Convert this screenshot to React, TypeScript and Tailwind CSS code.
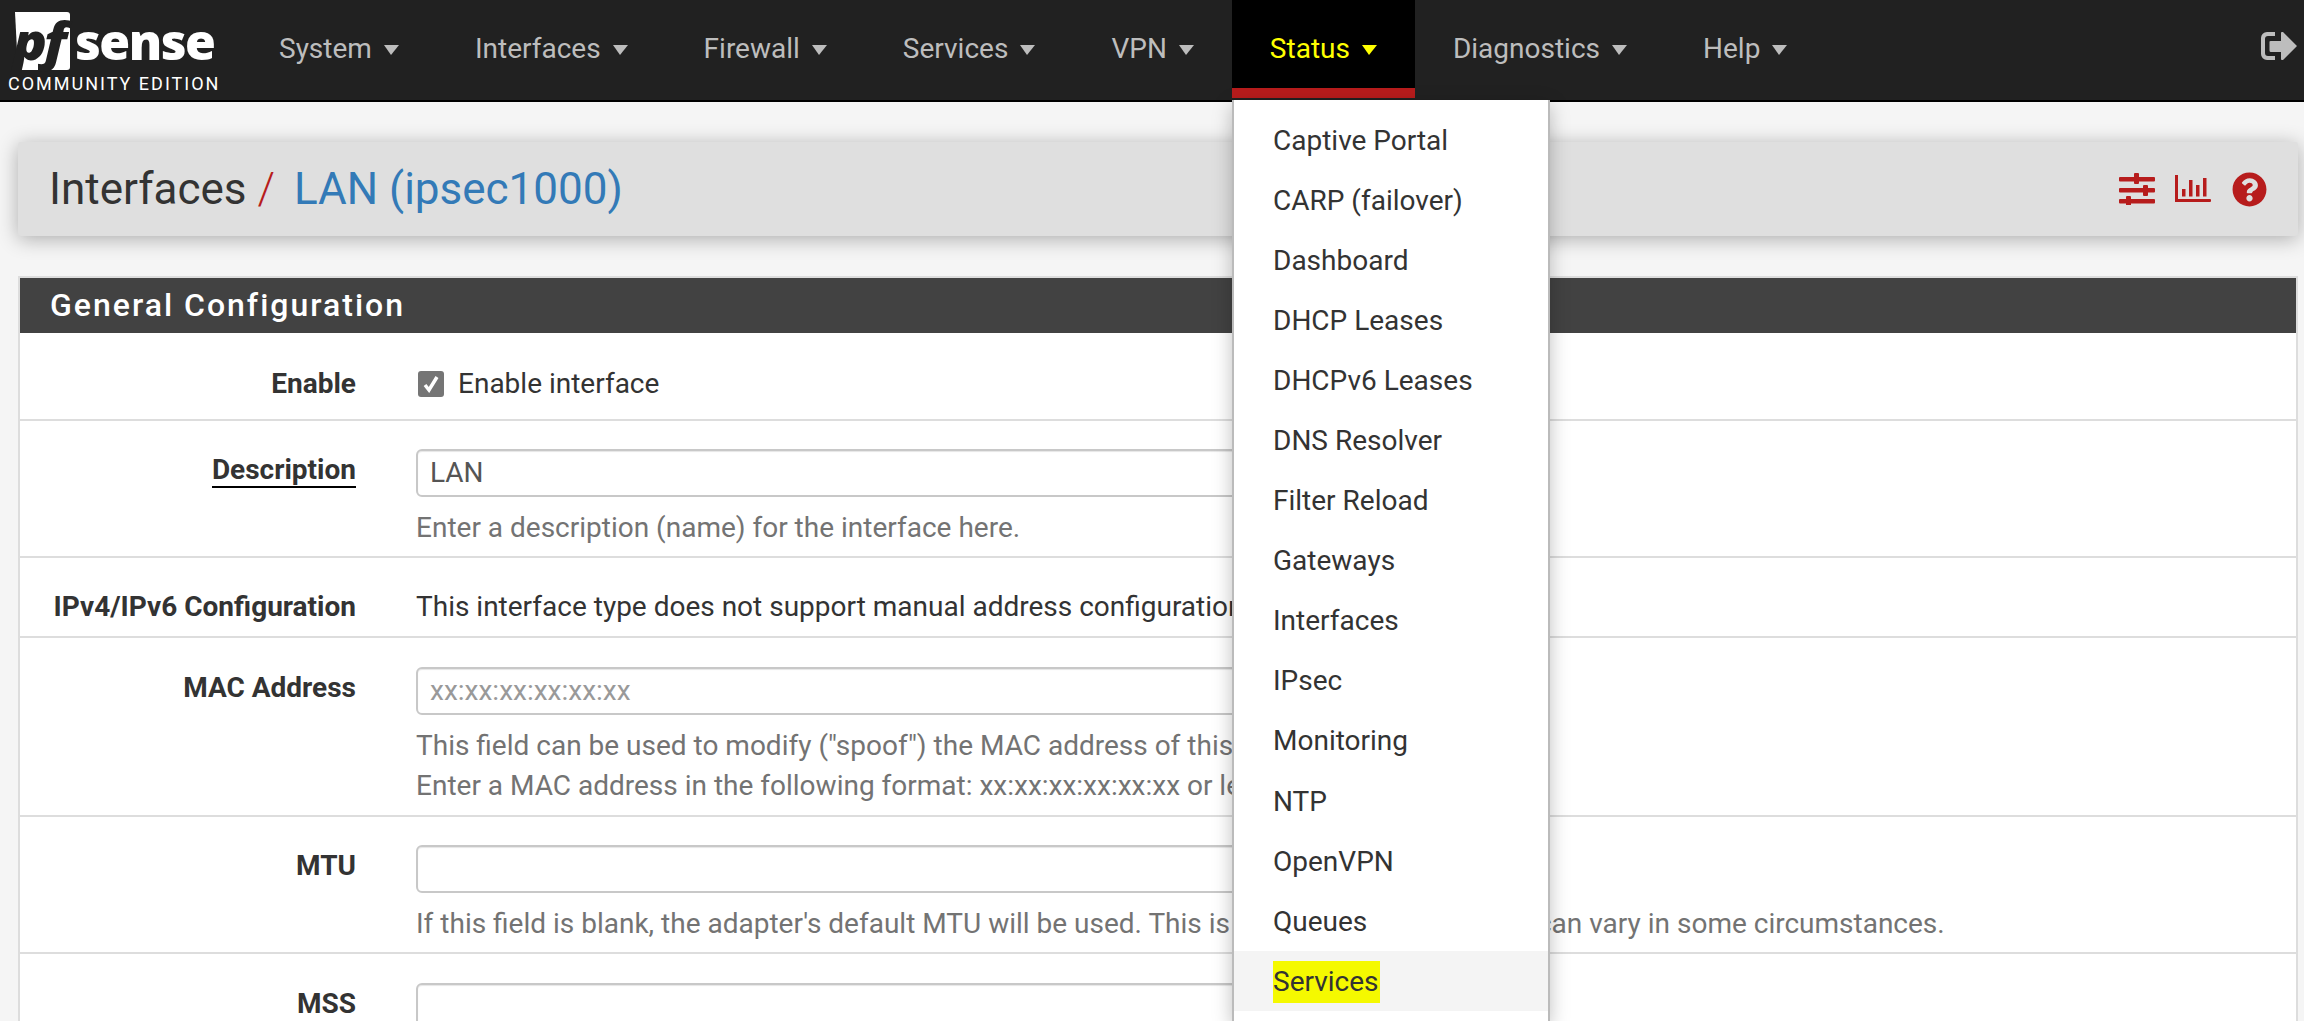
import { FaQuestionCircle } from 'react-icons/fa'

const navItems = ['System', 'Interfaces', 'Firewall', 'Services', 'VPN', 'Status', 'Diagnostics', 'Help']
const statusMenu = [
  'Captive Portal',
  'CARP (failover)',
  'Dashboard',
  'DHCP Leases',
  'DHCPv6 Leases',
  'DNS Resolver',
  'Filter Reload',
  'Gateways',
  'Interfaces',
  'IPsec',
  'Monitoring',
  'NTP',
  'OpenVPN',
  'Queues',
  'Services',
]

function Caret({ className }: { className: string }) {
  return <span className={`ml-[12px] mt-[3px] inline-block h-0 w-0 border-l-[7px] border-r-[8px] border-t-[10px] border-x-transparent ${className}`} />
}

function Logo() {
  return (
    <div className="w-[241px] shrink-0 pl-[8px] pt-[12px]">
      <div className="flex h-[58px] items-end">
        <div className="relative ml-[4px] h-[58px] w-[58px]">
          <svg width="58" height="58" viewBox="0 0 58 58" className="absolute inset-0">
            <path d="M3 0h52a3 3 0 0 1 3 3v52a3 3 0 0 1-3 3H6z" fill="white" />
          </svg>
          <span className="absolute left-[1px] top-[-3px] origin-left scale-x-[1.08] font-['Open_Sans',sans-serif] text-[52px] font-extrabold italic leading-[62px] tracking-[-3px] text-[#212121]">pf</span>
        </div>
        <span className="ml-[5px] font-['Open_Sans',sans-serif] text-[50px] font-extrabold leading-[58px] tracking-[-1.5px] text-white">sense</span>
      </div>
      <div className="mt-[4px] whitespace-nowrap font-['Roboto',sans-serif] text-[18px] leading-[20px] tracking-[2px] text-white">COMMUNITY EDITION</div>
    </div>
  )
}

function Navbar() {
  return (
    <nav className="flex h-[102px] border-b-[2px] border-black bg-[#212121]">
      <Logo />
      {navItems.map((item) =>
        item === 'Status' ? (
          <div key={item} className="flex h-[98px] items-center border-b-[10px] border-[#b71c1c] bg-black px-[38px] pt-[9px] text-[28px] text-[#ffff00]">
            {item}
            <Caret className="border-t-[#ffff00]" />
          </div>
        ) : (
          <div key={item} className="flex h-[98px] items-center px-[38px] pb-[1px] text-[28px] text-[#bdbdbd]">
            {item}
            <Caret className="border-t-[#bdbdbd]" />
          </div>
        ),
      )}
      <div className="ml-auto pr-[7px] pt-[32px]">
        <svg width="36" height="28" viewBox="0 0 36 28" className="text-[#bdbdbd]" fill="currentColor">
          <path d="M0 6a6 6 0 0 1 6-6h8v4H7a3 3 0 0 0-3 3v14a3 3 0 0 0 3 3h7v4H6a6 6 0 0 1-6-6z" />
          <path d="M22 0l14 14-14 14c-1 .6-2-.2-2-1v-7H10a1.500 1.500 0 0 1-1.500-1.500v-9A1.500 1.500 0 0 1 10 9h10V1c0-.8 1-1.600 2-1z" />
        </svg>
      </div>
    </nav>
  )
}

function PageHeader() {
  return (
    <div className="ml-[18px] mr-[6px] mt-[40px] flex h-[94px] items-center justify-between rounded-[3px] bg-[#dfdfdf] pl-[31px] pr-[31px] shadow-[0_3px_20px_rgba(0,0,0,0.3)]">
      <h1 className="text-[44px] font-normal leading-none text-[#333333]">
        Interfaces <span className="font-light text-[#b71c1c]">/</span>
        <span className="ml-[19px] text-[#337ab7]">LAN (ipsec1000)</span>
      </h1>
      <div className="flex items-center text-[#b71c1c]">
        <svg width="36" height="32" viewBox="0 0 36 32" fill="currentColor">
          <rect x="0" y="4" width="36" height="4.500" rx="1" />
          <rect x="15" y="0" width="5" height="11" rx="1" />
          <rect x="0" y="15" width="36" height="4.500" rx="1" />
          <rect x="24" y="12" width="5" height="11" rx="1" />
          <rect x="0" y="26" width="36" height="4.500" rx="1" />
          <rect x="7" y="23" width="5" height="10" rx="1" />
        </svg>
        <svg width="36" height="28" viewBox="0 0 36 28" fill="currentColor" className="ml-[20px]">
          <rect x="0" y="0" width="3" height="27" />
          <rect x="0" y="24" width="36" height="3" rx="1" />
          <rect x="7" y="14" width="3.500" height="7.500" />
          <rect x="14" y="5" width="3.500" height="16.500" />
          <rect x="21" y="10" width="3.500" height="11.500" />
          <rect x="28" y="3" width="3.500" height="18.500" />
        </svg>
        <FaQuestionCircle className="ml-[21px] h-[35px] w-[35px]" />
      </div>
    </div>
  )
}

function Row({ label, underline, children, className, labelClass = '' }: { label: string; underline?: boolean; children: React.ReactNode; className: string; labelClass?: string }) {
  return (
    <div className={`flex border-b-[2px] border-[#dddddd] ${className}`}>
      <div className={`w-[336px] shrink-0 text-right text-[28px] font-bold leading-[36px] text-[#333333] ${labelClass}`}>
        <span className={underline ? 'border-b-[2px] border-black' : ''}>{label}</span>
      </div>
      <div className="ml-[60px] min-w-0 flex-1">{children}</div>
    </div>
  )
}

function Field({ placeholder, value }: { placeholder?: string; value?: string }) {
  return (
    <div className="flex h-[48px] w-[1100px] items-center rounded-[6px] border-[2px] border-[#c8c8c8] bg-white px-[12px] text-[28px] shadow-[inset_0_1px_1px_rgba(0,0,0,0.1)]">
      {value ? <span className="text-[#555555]">{value}</span> : <span className="text-[#999999]">{placeholder}</span>}
    </div>
  )
}

function Help({ children }: { children: React.ReactNode }) {
  return <p className="mt-[11px] whitespace-nowrap text-[28px] leading-[40px] text-[#737373]">{children}</p>
}

function ConfigPanel() {
  return (
    <section className="ml-[18px] mr-[6px] mt-[40px] border-x-[2px] border-t-[2px] border-[#dddddd] bg-white">
      <h2 className="flex h-[55px] items-center bg-[#424242] pb-[2px] pl-[30px] text-[32px] font-medium tracking-[2px] text-white">General Configuration</h2>
      <Row label="Enable" className="h-[88px] pt-[33px]">
        <div className="flex h-[36px] items-center text-[28px] text-[#333333]">
          <span className="ml-[2px] flex h-[26px] w-[26px] items-center justify-center rounded-[3px] bg-[#757575]">
            <svg width="16" height="18" viewBox="0 0 16 18" fill="none" stroke="white" strokeWidth="3.500">
              <path d="M2 10l4 5 8-13" />
            </svg>
          </span>
          <span className="ml-[14px]">Enable interface</span>
        </div>
      </Row>
      <Row label="Description" underline className="h-[137px] pt-[28px]" labelClass="pt-[3px]">
        <Field value="LAN" />
        <Help>Enter a description (name) for the interface here.</Help>
      </Row>
      <Row label="IPv4/IPv6 Configuration" className="h-[80px] pt-[31px]">
        <p className="whitespace-nowrap text-[28px] leading-[36px] text-[#333333]">This interface type does not support manual address configuration on this page.</p>
      </Row>
      <Row label="MAC Address" className="h-[179px] pt-[29px]" labelClass="pt-[3px]">
        <Field placeholder="xx:xx:xx:xx:xx:xx" />
        <Help>
          This field can be used to modify ("spoof") the MAC address of this interface.
          <br />
          Enter a MAC address in the following format: xx:xx:xx:xx:xx:xx or leave blank.
        </Help>
      </Row>
      <Row label="MTU" className="h-[137px] pt-[28px]" labelClass="pt-[3px]">
        <Field />
        <Help>If this field is blank, the adapter's default MTU will be used. This is typically 1500 bytes but can vary in some circumstances.</Help>
      </Row>
      <Row label="MSS" className="h-[138px] pt-[29px]" labelClass="pt-[3px]">
        <Field />
      </Row>
    </section>
  )
}

function StatusDropdown() {
  return (
    <div className="absolute left-[1232px] top-[100px] h-[921px] w-[318px] border-x-[2px] border-[#bbbbbb] bg-white pt-[10px] shadow-[0_6px_18px_rgba(0,0,0,0.25)]">
      {statusMenu.map((item) => (
        <div key={item} className={`flex h-[60.1px] items-center pl-[39px] pt-[1px] text-[28px] text-[#333333] ${item === 'Services' ? 'bg-[#f4f4f4]' : ''}`}>
          <span className={item === 'Services' ? 'bg-[#f5f900] pr-[1px]' : ''}>{item}</span>
        </div>
      ))}
    </div>
  )
}

export default function App() {
  return (
    <div className="relative h-[1021px] overflow-hidden bg-[#f5f5f5] font-['Roboto',sans-serif]">
      <Navbar />
      <PageHeader />
      <ConfigPanel />
      <StatusDropdown />
    </div>
  )
}
